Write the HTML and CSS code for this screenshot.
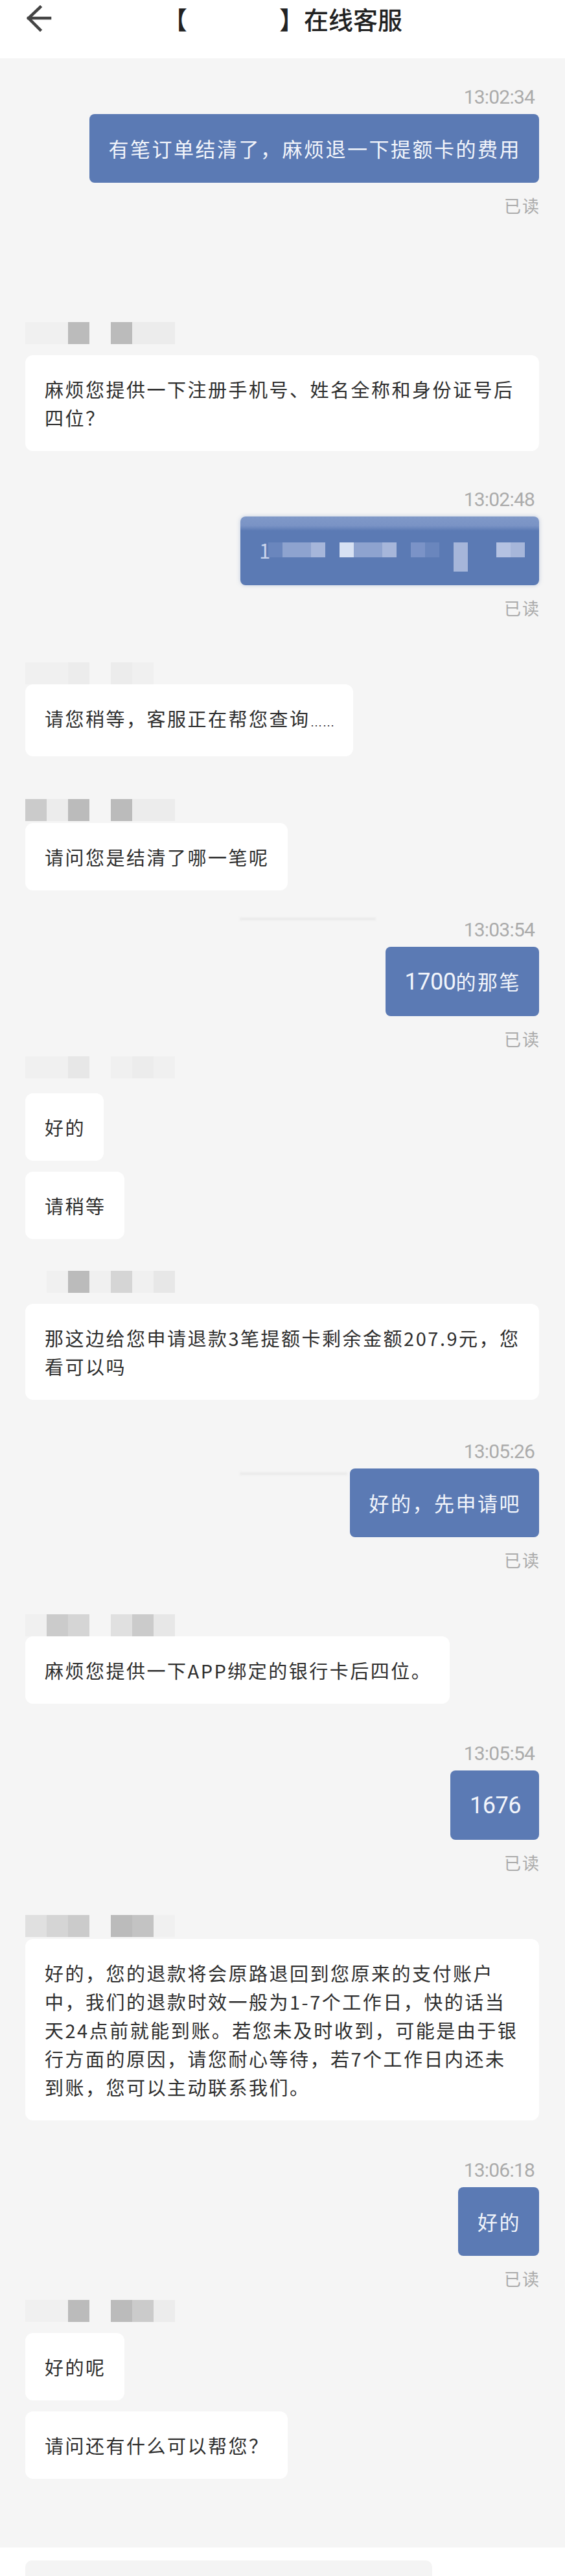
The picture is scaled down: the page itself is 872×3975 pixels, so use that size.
FILE: index.html
```html
<!DOCTYPE html>
<html lang="zh-CN">
<head>
<meta charset="utf-8">
<title>在线客服</title>
<link rel="stylesheet" href="styles.css">
</head>
<body>
<div class="app">
  <header class="topbar">
    <div class="topbar-row">
      <svg class="back" viewBox="0 0 40 42" aria-hidden="true">
        <path d="M37 20 H4 M22 3 L4 20 L22 38" fill="none" stroke="#444" stroke-width="4.5" stroke-linecap="square" stroke-linejoin="miter"/>
      </svg>
      <h1 class="title">【<span class="title-gap"></span>】在线客服</h1>
      <span class="topbar-end"></span>
    </div>
  </header>

  <main class="chat">
    <section class="u mt-44">
      <div class="ts">13:02:34</div>
      <div class="bubble me">有笔订单结清了，麻烦退一下提额卡的费用</div>
      <div class="read">已读</div>
    </section>

    <section class="s mt-164">
      <div class="name"><i class="k8"></i><i class="k8"></i><i class="k1"></i><i class="k0"></i><i class="k1"></i><i class="k7"></i><i class="k7"></i></div>
      <div class="bubble you full">麻烦您提供一下注册手机号、姓名全称和身份证号后<br>四位？</div>
    </section>

    <section class="u mt-59">
      <div class="ts">13:02:48</div>
      <div class="bubble me masked">
        <span class="num">1</span>
        <div class="mosaic">
          <i class="b1"></i><i class="b3"></i><i class="b3"></i><i class="b4"></i><i class="b0"></i><i class="b6"></i><i class="b3"></i><i class="b3"></i><i class="b4"></i><i class="b0"></i><i class="b2"></i><i class="b1"></i><i class="b0"></i><i class="b4"></i><i class="b0"></i><i class="b0"></i><i class="b5"></i><i class="b4"></i>
          <i class="b4 drop"></i>
        </div>
      </div>
      <div class="read">已读</div>
    </section>

    <section class="s flush mt-68">
      <div class="name"><i class="k8"></i><i class="k8"></i><i class="k7"></i><i class="k0"></i><i class="k7"></i><i class="k8"></i><i class="k0"></i></div>
      <div class="bubble you">请您稍等，客服正在帮您查询<span class="ell">……</span></div>
    </section>

    <section class="s near mt-66">
      <div class="name"><i class="k3"></i><i class="k7"></i><i class="k1"></i><i class="k0"></i><i class="k1"></i><i class="k7"></i><i class="k7"></i></div>
      <div class="bubble you">请问您是结清了哪一笔呢</div>
    </section>

    <section class="u smear smear-top mt-45">
      <div class="ts">13:03:54</div>
      <div class="bubble me"><span class="dig">1700</span>的那笔</div>
      <div class="read">已读</div>
    </section>

    <section class="s far mt-11">
      <div class="name"><i class="k8"></i><i class="k8"></i><i class="k6"></i><i class="k0"></i><i class="k8"></i><i class="k7"></i><i class="k8"></i></div>
      <div class="bubble you">好的</div>
      <div class="bubble you">请稍等</div>
    </section>

    <section class="s mt-49">
      <div class="name"><i class="k0"></i><i class="k8"></i><i class="k1"></i><i class="k8"></i><i class="k4"></i><i class="k8"></i><i class="k6"></i></div>
      <div class="bubble you full">那这边给您申请退款3笔提额卡剩余金额207.9元，您<br>看可以吗</div>
    </section>

    <section class="u smear smear-mid mt-64">
      <div class="ts">13:05:26</div>
      <div class="bubble me">好的，先申请吧</div>
      <div class="read">已读</div>
    </section>

    <section class="s flush mt-68">
      <div class="name"><i class="k8"></i><i class="k3"></i><i class="k4"></i><i class="k0"></i><i class="k5"></i><i class="k3"></i><i class="k6"></i></div>
      <div class="bubble you">麻烦您提供一下APP绑定的银行卡后四位。</div>
    </section>

    <section class="u mt-61">
      <div class="ts">13:05:54</div>
      <div class="bubble me"><span class="dig">1676</span></div>
      <div class="read">已读</div>
    </section>

    <section class="s near mt-65">
      <div class="name"><i class="k5"></i><i class="k4"></i><i class="k3"></i><i class="k0"></i><i class="k1"></i><i class="k2"></i><i class="k8"></i></div>
      <div class="bubble you full">好的，您的退款将会原路退回到您原来的支付账户<br>中，我们的退款时效一般为1-7个工作日，快的话当<br>天24点前就能到账。若您未及时收到，可能是由于银<br>行方面的原因，请您耐心等待，若7个工作日内还未<br>到账，您可以主动联系我们。</div>
    </section>

    <section class="u mt-61">
      <div class="ts">13:06:18</div>
      <div class="bubble me">好的</div>
      <div class="read">已读</div>
    </section>

    <section class="s mt-17">
      <div class="name"><i class="k8"></i><i class="k8"></i><i class="k1"></i><i class="k0"></i><i class="k1"></i><i class="k3"></i><i class="k7"></i></div>
      <div class="bubble you">好的呢</div>
      <div class="bubble you">请问还有什么可以帮您？</div>
    </section>
  </main>

  <footer class="bottombar">
    <div class="field"></div>
    <svg class="tools" viewBox="0 0 120 60" aria-hidden="true">
      <circle cx="31" cy="22" r="17" fill="none" stroke="#333" stroke-width="3.5"/>
      <circle cx="100" cy="24" r="17" fill="none" stroke="#333" stroke-width="3.5"/>
    </svg>
  </footer>
</div>
</body>
</html>
```

FILE: styles.css
```css
html, body {
  margin: 0;
  padding: 0;
}

body {
  background: #f5f5f5;
  font-family: "Noto Sans CJK SC", "Noto Sans", sans-serif;
  color: #2e2e2e;
}

.app {
  width: 872px;
}

/* ---------- top bar ---------- */
.topbar {
  height: 90px;
  background: #ffffff;
}

.topbar-row {
  height: 58px;
  display: grid;
  grid-template-columns: 1fr auto 1fr;
  align-items: center;
}

.back {
  width: 40px;
  height: 42px;
  margin-left: 40px;
  justify-self: start;
}

.title {
  margin: 0;
  font-size: 38px;
  font-weight: 500;
  color: #222222;
  line-height: 58px;
  white-space: nowrap;
}

.title-gap {
  display: inline-block;
  width: 142px;
}

/* ---------- chat ---------- */
.chat {
  display: flex;
  flex-direction: column;
  padding: 0 40px 106px 39px;
}

.u {
  display: flex;
  flex-direction: column;
  align-items: flex-end;
  position: relative;
}

.s {
  display: flex;
  flex-direction: column;
  align-items: flex-start;
  gap: 17px;
}

.s.flush .name { margin-bottom: -17px; }
.s.near .name { margin-bottom: -14px; }
.s.far .name { margin-bottom: 6px; }

/* faint editing smears left over the screenshot */
.smear::before {
  content: "";
  position: absolute;
  right: 252px;
  width: 210px;
  height: 4px;
  background: #eaeaea;
  filter: blur(1.5px);
}
.smear-top::before { top: -3px; }
.smear-mid::before { top: 48px; right: 296px; width: 166px; }

.mt-11 { margin-top: 11px; }
.mt-17 { margin-top: 17px; }
.mt-44 { margin-top: 44px; }
.mt-45 { margin-top: 45px; }
.mt-49 { margin-top: 49px; }
.mt-59 { margin-top: 59px; }
.mt-61 { margin-top: 61px; }
.mt-64 { margin-top: 64px; }
.mt-65 { margin-top: 65px; }
.mt-66 { margin-top: 66px; }
.mt-68 { margin-top: 68px; }
.mt-164 { margin-top: 164px; }

.ts {
  font-family: Roboto, "Liberation Sans", sans-serif;
  font-size: 30px;
  letter-spacing: -0.8px;
  line-height: 32px;
  color: #ababab;
  margin-right: 7px;
  margin-bottom: 10px;
}

.read {
  font-size: 26px;
  letter-spacing: 2px;
  line-height: 32px;
  color: #ababab;
  margin-top: 19px;
  margin-right: -2px;
}

.bubble {
  box-sizing: border-box;
}

.me {
  background: #5b7ab4;
  color: #f2f5fb;
  font-size: 31px;
  letter-spacing: 2.5px;
  line-height: 46px;
  padding: 30px 28px 30px 30px;
  border-radius: 8px;
}

.dig {
  font-family: Roboto, "Liberation Sans", sans-serif;
  font-size: 36px;
  letter-spacing: -0.5px;
}

.you {
  background: #ffffff;
  color: #2e2e2e;
  font-size: 29px;
  letter-spacing: 2.5px;
  line-height: 44px;
  padding: 30px 28px 30px 30px;
  border-radius: 12px;
}

.full {
  width: 793px;
  white-space: nowrap;
}

.ell {
  font-family: "Liberation Sans", sans-serif;
  font-size: 19px;
  letter-spacing: 0;
}

/* name mosaic */
.name {
  display: grid;
  grid-template-columns: repeat(7, 33px);
  grid-template-rows: 34px;
}

.name i { display: block; }
.k0 { background: transparent; }
.k1 { background: #bbbbbb; }
.k2 { background: #c3c3c3; }
.k3 { background: #cbcbcb; }
.k4 { background: #d5d5d5; }
.k5 { background: #e0e0e0; }
.k6 { background: #e7e7e7; }
.k7 { background: #ececec; }
.k8 { background: #f0f0f0; }

/* masked phone number bubble */
.masked {
  width: 461px;
  height: 106px;
  padding: 40px 0 0 29px;
  display: flex;
  align-items: flex-start;
  background: linear-gradient(to bottom, #8099c8 0, #7a93c5 14px, #5b7ab4 22px);
  box-shadow: 0 0 6px rgba(91, 122, 180, 0.35);
}

.num {
  display: block;
  width: 14px;
  font-size: 31px;
  line-height: 23px;
  letter-spacing: 0;
  color: #c9d4ec;
}

.mosaic {
  display: grid;
  grid-template-columns: repeat(18, 22px);
  grid-template-rows: 23px 22px;
}

.mosaic i { display: block; }
.mosaic .drop { grid-column: 14; grid-row: 2; }
.b0 { background: transparent; }
.b1 { background: #6a86bd; }
.b2 { background: #7b93c7; }
.b3 { background: #8ea3cf; }
.b4 { background: #a6b6da; }
.b5 { background: #b4c2e2; }
.b6 { background: #d7e1f3; }

/* ---------- bottom bar ---------- */
.bottombar {
  background: #ffffff;
  height: 120px;
  display: flex;
  align-items: flex-start;
  padding: 20px 0 0 39px;
  box-sizing: border-box;
}

.field {
  width: 628px;
  height: 80px;
  background: #f4f4f4;
  border-radius: 10px;
}

.tools {
  width: 120px;
  height: 60px;
  margin-left: 46px;
  margin-top: 23px;
}
```
